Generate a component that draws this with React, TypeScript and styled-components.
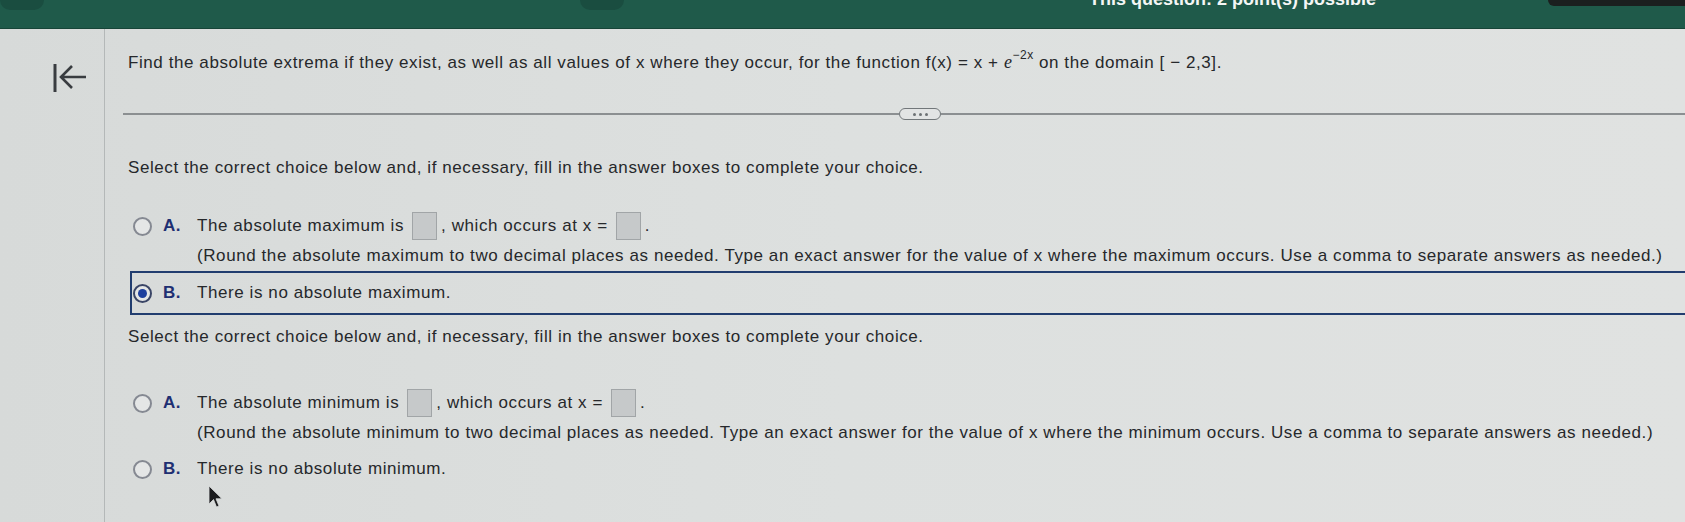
import React from "react";
import styled, { createGlobalStyle } from "styled-components";

const Global = createGlobalStyle`
  html, body { margin: 0; padding: 0; }
  body {
    background: linear-gradient(90deg, #d7dad9 0%, #dde0df 50%, #e0e2e1 100%);
    font-family: "Liberation Sans", Arial, sans-serif;
    color: #26282b;
    overflow: hidden;
  }
`;

const Page = styled.div`
  width: 1685px;
  height: 522px;
  position: relative;
  overflow: hidden;
`;

const Header = styled.header`
  height: 28px;
  background: #1f5a4a;
  border-bottom: 1px solid #174538;
  display: flex;
  align-items: flex-start;
  overflow: hidden;
`;

const Blob = styled.div<{ $ml: number }>`
  width: 44px;
  height: 10px;
  margin-left: ${(p) => p.$ml}px;
  border-radius: 0 0 22px 22px;
  background: #1a4d40;
`;

const Info = styled.div`
  margin-left: auto;
  margin-top: -11px;
  font-size: 18px;
  line-height: 20px;
  font-weight: 700;
  color: #f4f6f5;
  white-space: nowrap;
`;

const Tab = styled.div`
  width: 137px;
  height: 6px;
  margin-left: 172px;
  background: #1b1f1f;
  border-radius: 0 0 0 6px;
`;

const Main = styled.div`
  display: flex;
  height: 493px;
`;

const Sidebar = styled.aside`
  width: 105px;
  flex: none;
  border-right: 1.5px solid #b4b8b8;
  display: flex;
  align-items: flex-start;
  padding: 33px 0 0 52px;
  box-sizing: border-box;
`;

const BackIcon = styled.svg`
  width: 36px;
  height: 32px;
`;

const Content = styled.main`
  flex: 1;
  padding: 23px 0 0 23px;
  font-size: 17px;
  line-height: 20px;
  letter-spacing: 0.58px;
`;

const Question = styled.div`
  white-space: nowrap;
  sup { font-size: 12px; line-height: 0; position: relative; top: -2px; letter-spacing: 0.5px; }
  i { font-family: "Liberation Serif", serif; font-size: 18px; }
`;

const Separator = styled.div`
  display: flex;
  align-items: center;
  height: 14px;
  margin: 34px 0 0 -5px;
`;

const Line = styled.div<{ $w?: number }>`
  height: 2px;
  background: #8b8f91;
  ${(p) => (p.$w ? `width: ${p.$w}px; flex: none;` : "flex: 1;")}
`;

const Pill = styled.div`
  width: 40px;
  height: 10px;
  border: 1.5px solid #72777a;
  border-radius: 6px;
  background: #e2e4e4;
  display: flex;
  align-items: center;
  justify-content: center;
  gap: 3px;
`;

const Dot = styled.span`
  width: 3px;
  height: 3px;
  border-radius: 50%;
  background: #6c7174;
`;

const Prompt = styled.div<{ $mt: number }>`
  margin-top: ${(p) => p.$mt}px;
  white-space: nowrap;
`;

const ChoiceList = styled.div<{ $mt: number; $gap: number }>`
  margin-top: ${(p) => p.$mt}px;
  display: flex;
  flex-direction: column;
  gap: ${(p) => p.$gap}px;
`;

const Choice = styled.div<{ $selected?: boolean }>`
  display: flex;
  align-items: flex-start;
  margin-left: 2px;
  padding: ${(p) => (p.$selected ? "6px 0 6px 1px" : "0 0 0 3px")};
  border: ${(p) => (p.$selected ? "2px solid #213d6f" : "none")};
  border-right: none;
  margin-right: ${(p) => (p.$selected ? "-20px" : "0")};
`;

const RadioWrap = styled.div`
  height: 28px;
  display: flex;
  align-items: center;
  flex: none;
`;

const Radio = styled.div<{ $checked?: boolean }>`
  width: 15px;
  height: 15px;
  border-radius: 50%;
  border: 2px solid ${(p) => (p.$checked ? "#3a4566" : "#858992")};
  background: #e4e6e6;
  display: flex;
  align-items: center;
  justify-content: center;
  &::after {
    content: "";
    display: ${(p) => (p.$checked ? "block" : "none")};
    width: 9px;
    height: 9px;
    border-radius: 50%;
    background: #1d3f9e;
  }
`;

const Letter = styled.div`
  width: 34px;
  margin-left: 11px;
  flex: none;
  font-weight: 700;
  color: #1f2f72;
  line-height: 28px;
`;

const Body = styled.div`
  display: flex;
  flex-direction: column;
  gap: 6px;
`;

const FirstLine = styled.div`
  height: 28px;
  display: flex;
  align-items: center;
  white-space: nowrap;
`;

const Note = styled.div`
  white-space: nowrap;
`;

const AnswerBox = styled.span`
  display: inline-block;
  width: 23px;
  height: 26px;
  background: #c6c9ca;
  border: 1px solid #a1a5a7;
  margin: 0 4px 0 8px;
  flex: none;
`;

const Cursor = styled.svg`
  position: absolute;
  left: 208px;
  top: 485px;
  width: 16px;
  height: 24px;
`;

type Opt = { letter: string; selected?: boolean; first: React.ReactNode; note?: string };

function ChoiceItem({ letter, selected, first, note }: Opt) {
  return (
    <Choice $selected={selected}>
      <RadioWrap>
        <Radio $checked={selected} />
      </RadioWrap>
      <Letter>{letter}.</Letter>
      <Body>
        <FirstLine>{first}</FirstLine>
        {note && <Note>{note}</Note>}
      </Body>
    </Choice>
  );
}

const prompt =
  "Select the correct choice below and, if necessary, fill in the answer boxes to complete your choice.";

export default function App() {
  return (
    <Page>
      <Global />
      <Header>
        <Blob $ml={0} />
        <Blob $ml={536} />
        <Info>This question: 2 point(s) possible</Info>
        <Tab />
      </Header>
      <Main>
        <Sidebar>
          <BackIcon viewBox="0 0 36 32">
            <path d="M3 2 V30" stroke="#393c40" strokeWidth="3" fill="none" />
            <path d="M34 15 H10 M20 4 L9 15 L20 26" stroke="#393c40" strokeWidth="2.6" fill="none" strokeLinejoin="miter" />
          </BackIcon>
        </Sidebar>
        <Content>
          <Question>
            Find the absolute extrema if they exist, as well as all values of x where they occur, for the function f(x) = x + <i>e</i>
            <sup>−2x</sup> on the domain [ − 2,3].
          </Question>
          <Separator>
            <Line $w={776} />
            <Pill>
              <Dot />
              <Dot />
              <Dot />
            </Pill>
            <Line />
          </Separator>
          <Prompt $mt={37}>{prompt}</Prompt>
          <ChoiceList $mt={34} $gap={5}>
            <ChoiceItem
              letter="A"
              first={
                <>
                  The absolute maximum is<AnswerBox />, which occurs at x =<AnswerBox />.
                </>
              }
              note="(Round the absolute maximum to two decimal places as needed. Type an exact answer for the value of x where the maximum occurs. Use a comma to separate answers as needed.)"
            />
            <ChoiceItem letter="B" selected first="There is no absolute maximum." />
          </ChoiceList>
          <Prompt $mt={12}>{prompt}</Prompt>
          <ChoiceList $mt={42} $gap={12}>
            <ChoiceItem
              letter="A"
              first={
                <>
                  The absolute minimum is<AnswerBox />, which occurs at x =<AnswerBox />.
                </>
              }
              note="(Round the absolute minimum to two decimal places as needed. Type an exact answer for the value of x where the minimum occurs. Use a comma to separate answers as needed.)"
            />
            <ChoiceItem letter="B" first="There is no absolute minimum." />
          </ChoiceList>
        </Content>
      </Main>
      <Cursor viewBox="0 0 16 24">
        <path d="M1 1 L1 19 L5.5 14.5 L8.5 22 L11 21 L8 13.8 L14 13.8 Z" fill="#1b1c1e" stroke="#d8dada" strokeWidth="0.8" />
      </Cursor>
    </Page>
  );
}
